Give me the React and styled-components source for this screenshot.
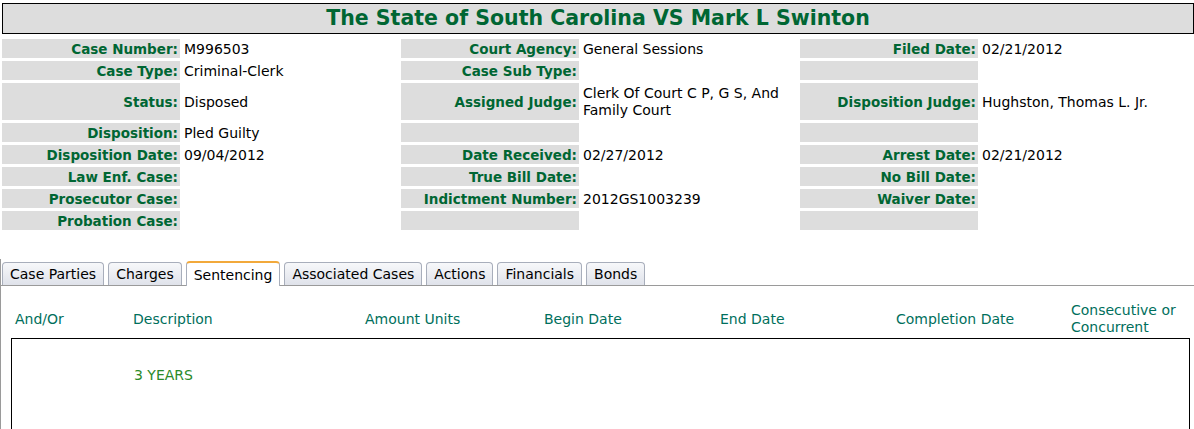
import React from 'react';
import styled, { createGlobalStyle } from 'styled-components';

const GlobalStyle = createGlobalStyle`
    html, body {
        margin: 0;
        padding: 0;
        overflow: hidden;
        background: #fff;
    }
    body {
        font-family: "DejaVu Sans", Verdana, sans-serif;
        font-size: 14px;
        color: #000;
    }
`;

const Page = styled.div`
    width: 1194px;
    padding-top: 3px;
`;

const Title = styled.h1`
    margin: 0 0 0 2px;
    height: 29px;
    border: 1px solid #000;
    background: #dddddd;
    color: #006633;
    font-size: 20.5px;
    font-weight: bold;
    line-height: 29px;
    text-align: center;
`;

const InfoGrid = styled.div`
    display: grid;
    grid-template-columns: repeat(3, 178px 221px);
    grid-template-rows: 19px 19px 37px 19px 19px 19px 19px 19px;
    row-gap: 3px;
    margin: 5px 0 0 2px;
`;

const Label = styled.div`
    display: flex;
    align-items: center;
    justify-content: flex-end;
    padding-right: 2px;
    background: #dddddd;
    color: #006633;
    font-size: 13.5px;
    font-weight: bold;
    white-space: nowrap;
`;

const Value = styled.div`
    display: flex;
    align-items: center;
    padding: 1px 0 0 4px;
    line-height: 17px;
    white-space: nowrap;
`;

const TabArea = styled.div`
    margin-top: 29px;
    border-left: 1px solid #9a9a9a;
`;

const TabBar = styled.div`
    display: flex;
    align-items: flex-end;
    gap: 4px;
    height: 26px;
    padding-left: 1px;
    border-bottom: 1px solid #9a9a9a;
`;

const Tab = styled.div`
    display: flex;
    align-items: center;
    height: ${p => (p.$active ? '25px' : '23px')};
    margin-bottom: ${p => (p.$active ? '-1px' : '0')};
    padding: 0 7px;
    box-sizing: border-box;
    border: 1px solid #a8aebb;
    border-bottom: none;
    border-top: ${p => (p.$active ? '2px solid #f2a93b' : '1px solid #a8aebb')};
    border-radius: 4px 4px 0 0;
    background: ${p => (p.$active ? '#fff' : 'linear-gradient(#f7f8fa, #dfe2ea)')};
    color: #000;
    white-space: nowrap;
`;

const cols = '118px 232px 179px 176px 176px 175px 1fr';

const HeaderRow = styled.div`
    display: grid;
    grid-template-columns: ${cols};
    align-items: center;
    height: 38px;
    padding: 14px 0 0 14px;
    color: #006f5c;
    line-height: 17px;
`;

const ResultBox = styled.div`
    margin: 0 4px 0 10px;
    min-height: 120px;
    border: 1px solid #000;
`;

const DataRow = styled.div`
    display: grid;
    grid-template-columns: ${cols};
    padding: 28px 0 0 4px;
    color: #2a8a2a;
`;

const info = [
    ['Case Number:', 'M996503', 'Court Agency:', 'General Sessions', 'Filed Date:', '02/21/2012'],
    ['Case Type:', 'Criminal-Clerk', 'Case Sub Type:', '', '', ''],
    ['Status:', 'Disposed', 'Assigned Judge:', <>Clerk Of Court C P, G S, And<br />Family Court</>, 'Disposition Judge:', 'Hughston, Thomas L. Jr.'],
    ['Disposition:', 'Pled Guilty', '', '', '', ''],
    ['Disposition Date:', '09/04/2012', 'Date Received:', '02/27/2012', 'Arrest Date:', '02/21/2012'],
    ['Law Enf. Case:', '', 'True Bill Date:', '', 'No Bill Date:', ''],
    ['Prosecutor Case:', '', 'Indictment Number:', '2012GS1003239', 'Waiver Date:', ''],
    ['Probation Case:', '', '', '', '', ''],
];

const tabs = ['Case Parties', 'Charges', 'Sentencing', 'Associated Cases', 'Actions', 'Financials', 'Bonds'];

const headers = ['And/Or', 'Description', 'Amount Units', 'Begin Date', 'End Date', 'Completion Date', <>Consecutive or<br />Concurrent</>];

function App() {
    return (
        <Page>
            <GlobalStyle />
            <Title>The State of South Carolina VS Mark L Swinton</Title>
            <InfoGrid>
                {info.map((row, r) =>
                    row.map((cell, c) =>
                        c % 2 === 0
                            ? <Label key={`${r}-${c}`}>{cell}</Label>
                            : <Value key={`${r}-${c}`}>{cell}</Value>
                    )
                )}
            </InfoGrid>
            <TabArea>
                <TabBar>
                    {tabs.map(t => (
                        <Tab key={t} $active={t === 'Sentencing'}>{t}</Tab>
                    ))}
                </TabBar>
                <HeaderRow>
                    {headers.map((h, i) => <div key={i}>{h}</div>)}
                </HeaderRow>
                <ResultBox>
                    <DataRow>
                        <div></div>
                        <div>3 YEARS</div>
                    </DataRow>
                </ResultBox>
            </TabArea>
        </Page>
    );
}

export default App;
